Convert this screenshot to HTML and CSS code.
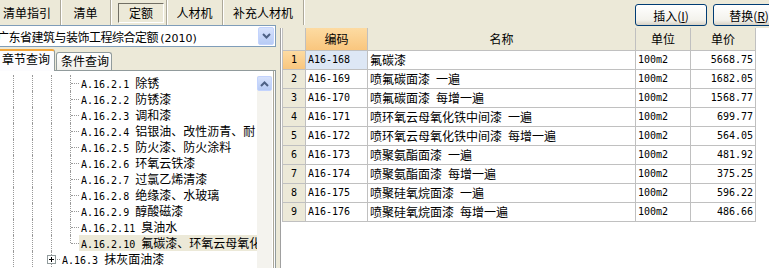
FILE: index.html
```html
<!DOCTYPE html>
<html lang="zh-CN">
<head>
  <meta charset="UTF-8">
  <title>定额</title>
  <link rel="stylesheet" href="styles.css">
</head>
<body>
  <div class="toolbar">
    <span class="tab t1">清单指引</span>
    <span class="tab t2">清单</span>
    <span class="tab t3"><span class="pressed">定额</span></span>
    <span class="tab t4">人材机</span>
    <span class="tab t5">补充人材机</span>
    <div class="actions">
      <button class="btn">插入(<u>I</u>)</button>
      <button class="btn">替换(<u>R</u>)</button>
    </div>
  </div>

  <div class="main">
    <div class="side">
      <div class="combo">
        <span class="combo-text">广东省建筑与装饰工程综合定额 <span class="ver">(2010)</span></span>
        <span class="combo-btn">
          <svg width="9" height="6" viewBox="0 0 9 6"><path d="M1 1l3.5 3.5L8 1" fill="none" stroke="#4d6185" stroke-width="2"/></svg>
        </span>
      </div>
      <div class="side-tabs">
        <span class="stab active">章节查询</span>
        <span class="stab">条件查询</span>
      </div>
      <div class="page">
        <div class="tree">
          <div class="nodes">
            <div class="row"><i class="g"></i><i class="g"></i><i class="g"></i><i class="elbow"></i><span class="label"><span class="lat">A.16.2.1 </span>除锈</span></div>
            <div class="row"><i class="g"></i><i class="g"></i><i class="g"></i><i class="elbow"></i><span class="label"><span class="lat">A.16.2.2 </span>防锈漆</span></div>
            <div class="row"><i class="g"></i><i class="g"></i><i class="g"></i><i class="elbow"></i><span class="label"><span class="lat">A.16.2.3 </span>调和漆</span></div>
            <div class="row"><i class="g"></i><i class="g"></i><i class="g"></i><i class="elbow"></i><span class="label"><span class="lat">A.16.2.4 </span>铝银油、改性沥青、耐</span></div>
            <div class="row"><i class="g"></i><i class="g"></i><i class="g"></i><i class="elbow"></i><span class="label"><span class="lat">A.16.2.5 </span>防火漆、防火涂料</span></div>
            <div class="row"><i class="g"></i><i class="g"></i><i class="g"></i><i class="elbow"></i><span class="label"><span class="lat">A.16.2.6 </span>环氧云铁漆</span></div>
            <div class="row"><i class="g"></i><i class="g"></i><i class="g"></i><i class="elbow"></i><span class="label"><span class="lat">A.16.2.7 </span>过氯乙烯清漆</span></div>
            <div class="row"><i class="g"></i><i class="g"></i><i class="g"></i><i class="elbow"></i><span class="label"><span class="lat">A.16.2.8 </span>绝缘漆、水玻璃</span></div>
            <div class="row"><i class="g"></i><i class="g"></i><i class="g"></i><i class="elbow"></i><span class="label"><span class="lat">A.16.2.9 </span>醇酸磁漆</span></div>
            <div class="row"><i class="g"></i><i class="g"></i><i class="g"></i><i class="elbow"></i><span class="label"><span class="lat">A.16.2.11 </span>臭油水</span></div>
            <div class="row"><i class="g"></i><i class="g"></i><i class="g"></i><i class="elbow last"></i><span class="label sel"><span class="lat">A.16.2.10 </span>氟碳漆、环氧云母氧化铁漆</span></div>
            <div class="row"><i class="g"></i><i class="g"></i><i class="elbow"><b class="plus"></b></i><span class="label"><span class="lat">A.16.3 </span>抹灰面油漆</span></div>
          </div>
          <div class="vscroll">
            <span class="vs-btn">
              <svg width="9" height="6" viewBox="0 0 9 6"><path d="M1 5l3.5-3.5L8 5" fill="none" stroke="#4d6185" stroke-width="2"/></svg>
            </span>
          </div>
        </div>
      </div>
    </div>

    <div class="splitter"></div>

    <div class="content">
      <div class="grid">
        <div class="hd"></div><div class="hd sel">编码</div><div class="hd">名称</div><div class="hd">单位</div><div class="hd">单价</div>

        <div class="num sel">1</div><div class="code sel">A16-168</div><div class="name">氟碳漆</div><div class="unit">100m2</div><div class="price">5668.75</div>
        <div class="num">2</div><div class="code">A16-169</div><div class="name">喷氟碳面漆&ensp;一遍</div><div class="unit">100m2</div><div class="price">1682.05</div>
        <div class="num">3</div><div class="code">A16-170</div><div class="name">喷氟碳面漆&ensp;每增一遍</div><div class="unit">100m2</div><div class="price">1568.77</div>
        <div class="num">4</div><div class="code">A16-171</div><div class="name">喷环氧云母氧化铁中间漆&ensp;一遍</div><div class="unit">100m2</div><div class="price">699.77</div>
        <div class="num">5</div><div class="code">A16-172</div><div class="name">喷环氧云母氧化铁中间漆&ensp;每增一遍</div><div class="unit">100m2</div><div class="price">564.05</div>
        <div class="num">6</div><div class="code">A16-173</div><div class="name">喷聚氨酯面漆&ensp;一遍</div><div class="unit">100m2</div><div class="price">481.92</div>
        <div class="num">7</div><div class="code">A16-174</div><div class="name">喷聚氨酯面漆&ensp;每增一遍</div><div class="unit">100m2</div><div class="price">375.25</div>
        <div class="num">8</div><div class="code">A16-175</div><div class="name">喷聚硅氧烷面漆&ensp;一遍</div><div class="unit">100m2</div><div class="price">596.22</div>
        <div class="num">9</div><div class="code">A16-176</div><div class="name">喷聚硅氧烷面漆&ensp;每增一遍</div><div class="unit">100m2</div><div class="price">486.66</div>
      </div>
    </div>
  </div>
</body>
</html>
```

FILE: styles.css
```css
body {
  margin: 0;
  width: 769px;
  height: 268px;
  overflow: hidden;
  background: #ece9d8;
  color: #000;
  font: 12px "Noto Sans CJK SC", sans-serif;
}
.lat, .num, .code, .unit, .price {
  font-family: "DejaVu Sans Mono", monospace;
  font-size: 10px;
}

/* top tab strip */
.toolbar {
  display: flex;
  height: 25px;
}
.tab {
  box-sizing: border-box;
  display: flex;
  align-items: center;
  justify-content: center;
  height: 25px;
  flex: none;
  border-right: 1px solid #aca899;
  box-shadow: 1px 0 #fff;
}
.t1 { width: 61px; justify-content: flex-start; padding-left: 3px; }
.t2 { width: 50px; }
.t3 { width: 56px; padding-left: 5px; }
.t4 { width: 56px; }
.t5 { width: 81px; }
.pressed {
  line-height: 16px;
  padding: 1px 10px;
  border: 1px solid;
  border-color: #716f64 #fff #fff #716f64;
}
.actions {
  margin-left: auto;
  width: 134px;
  display: flex;
  gap: 6px;
  padding-top: 4px;
}
.btn {
  flex: none;
  width: 72px;
  height: 22px;
  padding: 0;
  font: inherit;
  color: #000;
  border: 1px solid #003c74;
  border-radius: 3px;
  background: linear-gradient(#fff, #f3f2ec 75%, #d8d2c6);
}

/* main area */
.main {
  display: flex;
  height: 243px;
}
.side {
  flex: none;
  width: 279px;
  margin-left: -3px;
}
.combo {
  box-sizing: border-box;
  display: flex;
  align-items: center;
  height: 22px;
  padding: 1px;
  border: 1px solid #7f9db9;
  background: #fff;
}
.combo-text {
  flex: 1;
  margin-left: -2px;
  letter-spacing: -0.5px;
  white-space: nowrap;
  overflow: hidden;
}
.ver {
  font-family: "DejaVu Sans", sans-serif;
  font-size: 11px;
  letter-spacing: 0;
}
.combo-btn, .vs-btn {
  box-sizing: border-box;
  display: flex;
  align-items: center;
  justify-content: center;
  border: 1px solid #c3d3fd;
  border-radius: 2px;
  background: linear-gradient(#d7e2fc, #b7cbf5);
}
.combo-btn {
  width: 16px;
  height: 18px;
}

.side-tabs {
  position: relative;
  z-index: 1;
  display: flex;
  align-items: flex-end;
  height: 21px;
  margin-top: 2px;
}
.stab {
  box-sizing: border-box;
  height: 18px;
  margin-left: 1px;
  padding: 0 2px 0 4px;
  line-height: 16px;
  border: 1px solid #919b9c;
  border-bottom: 0;
  border-radius: 3px 3px 0 0;
  background: linear-gradient(#fff, #f0efe9);
}
.stab.active {
  height: 22px;
  margin-bottom: -1px;
  padding: 0 4px 3px 3px;
  border-top: 2px solid #f3a73c;
  background: #fcfcfe;
}

.page {
  box-sizing: border-box;
  height: 198px;
  padding-right: 1px;
  border: 1px solid #919b9c;
  border-bottom: 0;
  background: #fcfcfe;
}
.tree {
  display: flex;
  height: 100%;
  border-right: 1px solid #aca899;
  background: #fff;
}
.nodes {
  flex: 1;
  overflow: hidden;
  padding: 4px 0 0 15px;
  white-space: nowrap;
}
.row {
  display: flex;
  height: 16px;
  line-height: 16px;
}
.g {
  box-sizing: border-box;
  flex: none;
  width: 19px;
  border-left: 1px dotted #999;
}
.elbow {
  position: relative;
  flex: none;
  width: 9px;
}
.elbow::before {
  content: "";
  position: absolute;
  left: 0;
  top: 0;
  bottom: 0;
  border-left: 1px dotted #999;
}
.elbow.last::before { bottom: 8px; }
.elbow::after {
  content: "";
  position: absolute;
  left: 1px;
  right: 0;
  top: 8px;
  border-top: 1px dotted #999;
}
.plus {
  position: absolute;
  z-index: 1;
  left: -4px;
  top: 4px;
  box-sizing: border-box;
  width: 9px;
  height: 9px;
  border: 1px solid #919b9c;
  background:
    linear-gradient(#000, #000) center / 5px 1px no-repeat,
    linear-gradient(#000, #000) center / 1px 5px no-repeat,
    #fff;
}
.label { padding: 0 2px; }
.label.sel { background: #ece9d8; }

.vscroll {
  flex: none;
  width: 15px;
  margin: 5px 1px 0 0;
  background: #f4f3ee;
}
.vs-btn { height: 15px; }

.splitter {
  flex: none;
  width: 4px;
}

/* quota grid */
.content {
  flex: 1;
  margin-top: 3px;
  padding-left: 1px;
  border-left: 1px solid #a0a0a0;
  background: #fff;
}
.grid {
  display: inline-grid;
  grid-template-columns: 22px 61px 267px 54px 64px;
  grid-template-rows: 22px;
  grid-auto-rows: 18px;
  gap: 1px;
  padding: 0 1px 1px;
  background: #c0c0c0;
}
.grid > div {
  padding: 0 2px;
  line-height: 18px;
  white-space: nowrap;
  overflow: hidden;
  background: #fff;
}
.grid > .hd {
  line-height: 22px;
  text-align: center;
  background: #ece9d8;
}
.grid > .num {
  text-align: center;
  background: #ece9d8;
}
.grid > .hd.sel, .grid > .num.sel {
  background: linear-gradient(#fddba2, #f9c67e);
}
.grid > .code.sel { background: #dde7f5; }
.grid > .price { text-align: right; }
```
